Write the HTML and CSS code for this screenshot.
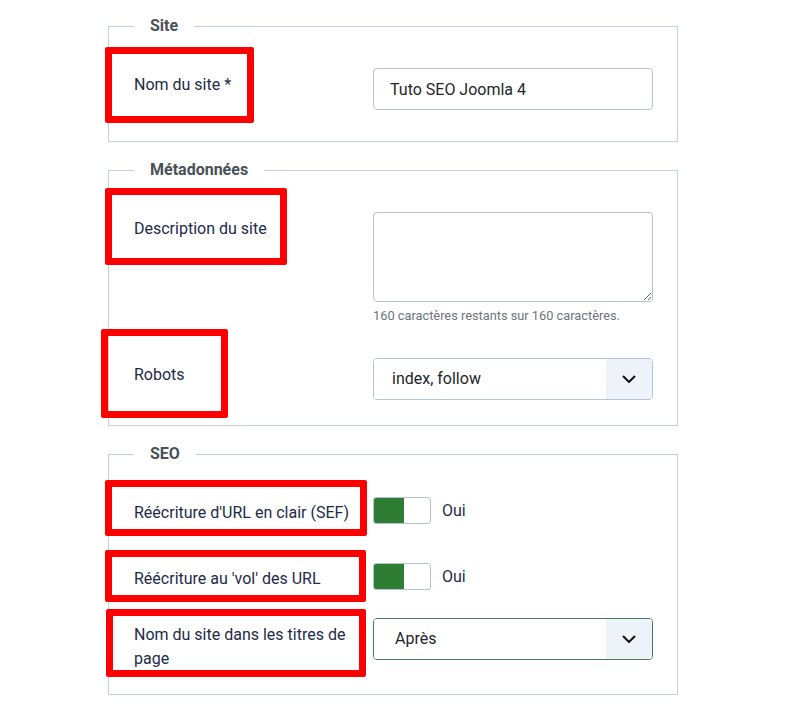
FILE: index.html
```html
<!DOCTYPE html>
<html lang="fr">
  <head>
    <meta charset="utf-8">
    <title>Configuration globale - Site</title>
    <link rel="stylesheet" href="styles.css">
  </head>
  <body>
    <main class="options">
      <fieldset class="options-group options-group--site">
        <legend>Site</legend>
        <div class="control-group">
          <div class="control-label mark mark-sitename"><label for="sitename">Nom du site *</label></div>
          <div class="controls">
            <input type="text" id="sitename" class="form-control" value="Tuto SEO Joomla 4">
          </div>
        </div>
      </fieldset>

      <fieldset class="options-group options-group--meta">
        <legend>Métadonnées</legend>
        <div class="control-group">
          <div class="control-label mark mark-desc"><label for="metadesc">Description du site</label></div>
          <div class="controls">
            <textarea id="metadesc" class="form-control form-textarea"></textarea>
            <div class="form-text">160 caractères restants sur 160 caractères.</div>
          </div>
        </div>
        <div class="control-group">
          <div class="control-label mark mark-robots"><label for="robots">Robots</label></div>
          <div class="controls">
            <div class="custom-select">
              <select id="robots">
                <option>index, follow</option>
                <option>noindex, follow</option>
                <option>index, nofollow</option>
                <option>noindex, nofollow</option>
              </select>
              <span class="select-arrow">
                <svg width="14" height="8" viewBox="0 0 14 8"><polyline points="1,1 7,7 13,1" fill="none" stroke="#111" stroke-width="2"/></svg>
              </span>
            </div>
          </div>
        </div>
      </fieldset>

      <fieldset class="options-group options-group--seo">
        <legend>SEO</legend>
        <div class="control-group">
          <div class="control-label mark mark-sef"><label>Réécriture d'URL en clair (SEF)</label></div>
          <div class="controls">
            <div class="switcher">
              <span class="switcher-track"><span class="switcher-on"></span></span>
              <span>Oui</span>
            </div>
          </div>
        </div>
        <div class="control-group gap-lg">
          <div class="control-label mark mark-rewrite"><label>Réécriture au 'vol' des URL</label></div>
          <div class="controls">
            <div class="switcher">
              <span class="switcher-track"><span class="switcher-on"></span></span>
              <span>Oui</span>
            </div>
          </div>
        </div>
        <div class="control-group gap-sm">
          <div class="control-label mark mark-pagetitles"><label for="pagetitles">Nom du site dans les titres de page</label></div>
          <div class="controls">
            <div class="custom-select is-valid">
              <select id="pagetitles">
                <option>Après</option>
                <option>Avant</option>
                <option>Non</option>
              </select>
              <span class="select-arrow">
                <svg width="14" height="8" viewBox="0 0 14 8"><polyline points="1,1 7,7 13,1" fill="none" stroke="#111" stroke-width="2"/></svg>
              </span>
            </div>
          </div>
        </div>
      </fieldset>
    </main>
  </body>
</html>
```

FILE: styles.css
```css
*, *::before, *::after {
  box-sizing: border-box;
}

body {
  margin: 0;
  background: #fff;
  color: #22262a;
  font-family: Roboto, "Noto Sans", sans-serif;
  font-size: 16px;
  line-height: 1.5;
}

.options {
  width: 570px;
  margin-left: 108px;
}

.options-group {
  min-width: 0;
  margin: 16px 0 0;
  padding: 30px 24px 25px 25px;
  border: 1px solid #c3cee0;
}
.options-group--site {
  margin-top: 14px;
  padding-bottom: 31px;
}
.options-group--seo {
  padding-bottom: 23px;
}

legend {
  padding: 0 16px;
  color: #495057;
  font-weight: 700;
  line-height: 24px;
}

.control-group {
  display: grid;
  grid-template-columns: 239px 280px;
  align-items: start;
}
.control-group + .control-group {
  margin-top: 32px;
}
.control-group.gap-lg {
  margin-top: 37px;
}
.control-group.gap-sm {
  margin-top: 27px;
}

.control-label {
  position: relative;
  padding: 5px 10px 0 0;
  color: #1d2b49;
}

/* red annotation frames drawn over the labels */
.mark::after {
  content: "";
  position: absolute;
  border: 7px solid #ff0000;
  border-radius: 2px;
  pointer-events: none;
}
.mark-sitename::after { left: -29px; top: -21px; width: 149px; height: 76px; }
.mark-desc::after { left: -29px; top: -24px; width: 182px; height: 77px; }
.mark-robots::after { left: -33px; top: -29px; width: 127px; height: 89px; }
.mark-sef::after { left: -29px; top: -16px; width: 262px; height: 56px; }
.mark-rewrite::after { left: -29px; top: -12px; width: 261px; height: 52px; }
.mark-pagetitles::after { left: -28px; top: -9px; width: 260px; height: 68px; }

.form-control {
  display: block;
  width: 280px;
  height: 42px;
  padding: 8px 16px;
  border: 1px solid #b6c3d8;
  border-radius: 4px;
  background: #fff;
  color: #22262a;
  font: inherit;
}

.form-textarea {
  height: 90px;
}

.form-text {
  margin-top: 4px;
  color: #6c757d;
  font-size: 12.8px;
  line-height: 20px;
}

.custom-select {
  display: flex;
  width: 280px;
  height: 42px;
  border: 1px solid #b6c3d8;
  border-radius: 4px;
  overflow: hidden;
}
.custom-select.is-valid {
  border-color: #457d54;
}

.custom-select select {
  flex: 1;
  min-width: 0;
  padding: 0 0 0 18px;
  border: 0;
  background: #fff;
  color: #22262a;
  font: inherit;
  -webkit-appearance: none;
  appearance: none;
  outline: none;
}
.custom-select.is-valid select {
  padding-left: 21px;
}

.select-arrow {
  display: flex;
  align-items: center;
  justify-content: center;
  width: 46px;
  background: #eef3fa;
}

.switcher {
  display: flex;
  align-items: center;
  gap: 11px;
  height: 29px;
  color: #1d2b49;
}

.switcher-track {
  display: flex;
  width: 58px;
  height: 27px;
  border: 1px solid #b5c4cc;
  border-radius: 3px;
  overflow: hidden;
  background: #fff;
}

.switcher-on {
  width: 30px;
  background: #2f7d32;
}
```
